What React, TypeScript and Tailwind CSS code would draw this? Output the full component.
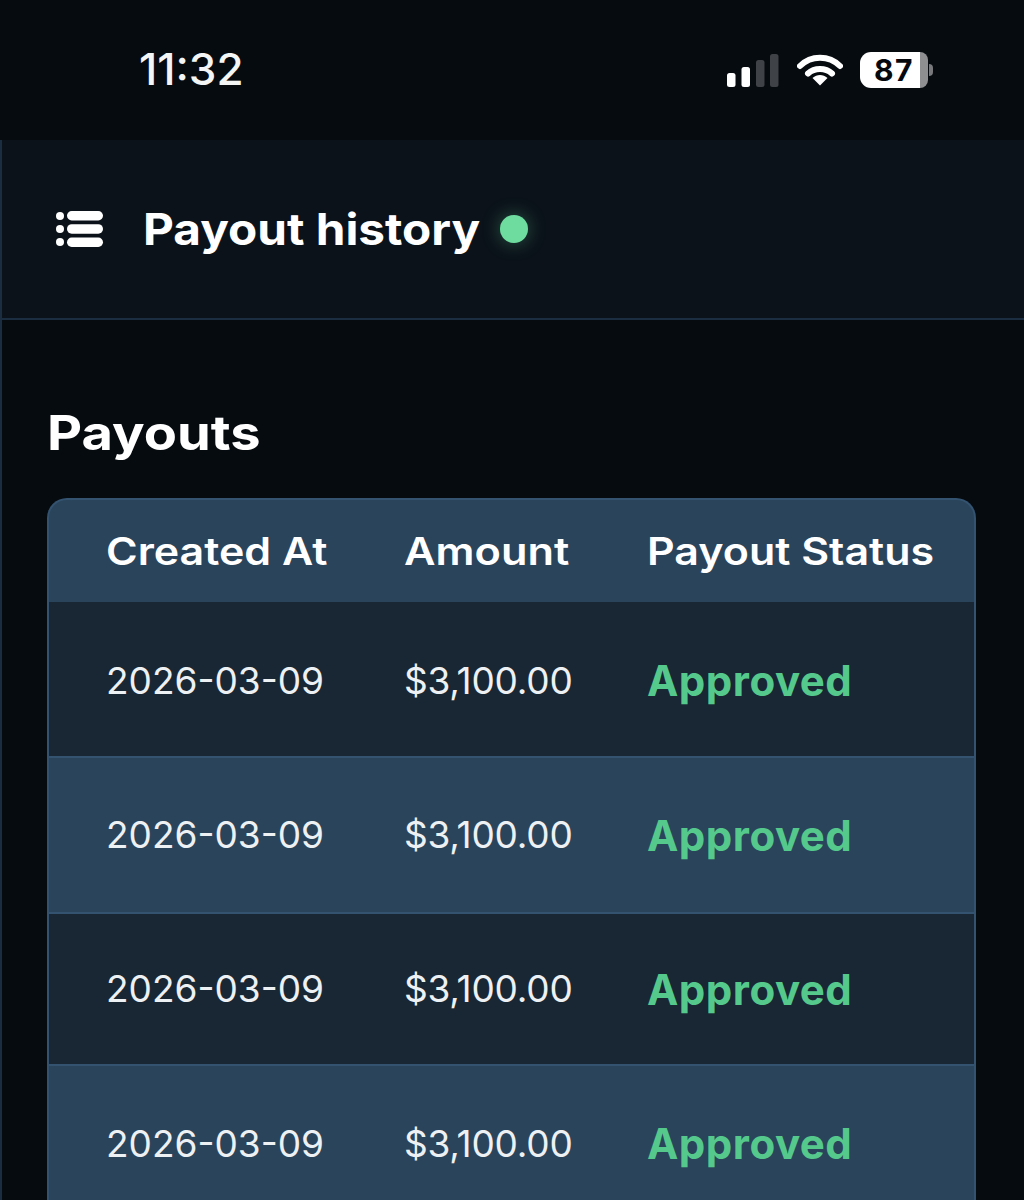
const rows = [
  { bg: "bg-[#192735]", height: "h-[156px]", pad: "pt-[3px]" },
  { bg: "bg-[#2a445b]", height: "h-[156px]", pad: "pt-0" },
  { bg: "bg-[#192735]", height: "h-[152px]", pad: "pt-0" },
  { bg: "bg-[#2a445b]", height: "h-[154px]", pad: "pt-[3px]" },
];

// the reference heading face is an extended grotesque, Inter stretched sideways is the nearest
const wide = "origin-left whitespace-nowrap font-['Inter',sans-serif]";

function SignalIcon() {
  return (
    <svg width="52" height="33" viewBox="0 0 52 33" className="block">
      <rect x="0" y="19" width="8.5" height="14" rx="2.5" fill="#fff" />
      <rect x="14.5" y="13" width="8.5" height="20" rx="2.5" fill="#fff" />
      <rect x="29" y="6" width="8.5" height="27" rx="2.5" fill="#3f4347" />
      <rect x="43" y="0" width="8.5" height="33" rx="2.5" fill="#3f4347" />
    </svg>
  );
}

function WifiIcon() {
  return (
    <svg width="46" height="34" viewBox="0 0 46 34" className="block">
      <path d="M3 13 C14 2 32 2 43 13" fill="none" stroke="#fff" strokeWidth="6" strokeLinecap="round" />
      <path d="M11 20.5 C17.5 14.5 28.5 14.5 35 20.5" fill="none" stroke="#fff" strokeWidth="6" strokeLinecap="round" />
      <path d="M15.5 25 C20 21 26 21 30.5 25 L23 32.5 Z" fill="#fff" />
    </svg>
  );
}

function BatteryIcon() {
  return (
    <div className="flex items-center">
      <div className="flex h-[36px] w-[60px] items-center rounded-l-[11px] bg-white pl-[14px]">
        <span className="text-[30px] leading-none font-bold tracking-[1.5px] text-[#05090e]">87</span>
      </div>
      <div className="h-[36px] w-[8px] rounded-r-[10px] bg-[#8d8f91]" />
      <div className="ml-[1px] h-[12px] w-[4px] rounded-r-full bg-[#77797b]" />
    </div>
  );
}

function ListIcon() {
  return (
    <svg width="49" height="38" viewBox="0 0 49 38" className="block">
      <circle cx="5" cy="6" r="4" fill="#fff" />
      <circle cx="5" cy="19" r="4" fill="#fff" />
      <circle cx="5" cy="32" r="4" fill="#fff" />
      <rect x="12" y="1" width="36" height="9.5" rx="4.7" fill="#fff" />
      <rect x="12" y="14.2" width="36" height="9.5" rx="4.7" fill="#fff" />
      <rect x="12" y="27.5" width="36" height="9.5" rx="4.7" fill="#fff" />
    </svg>
  );
}

export default function App() {
  return (
    <div className="h-[1200px] w-[1024px] overflow-hidden bg-[#060b10] font-['Inter',sans-serif] text-white">
      <div className="flex h-[140px] items-center justify-between pr-[91px] pl-[139px]">
        <span className="-mt-[2px] text-[44px] leading-none font-medium text-[#f4f5f5]">11:32</span>
        <div className="flex items-center">
          <SignalIcon />
          <div className="ml-[18px]">
            <WifiIcon />
          </div>
          <div className="ml-[17px]">
            <BatteryIcon />
          </div>
        </div>
      </div>

      <div className="h-[1060px] border-l-2 border-[#1b2e41]">
        <div className="flex h-[180px] items-center border-b-2 border-[#1b2e41] bg-[#0b121a] pl-[53px]">
          <ListIcon />
          <h1 className={`ml-[39px] ${wide} scale-x-[1.084] text-[44px] leading-none font-bold text-white`}>
            Payout history
          </h1>
          <span className="ml-[46px] size-[28px] rounded-full bg-[#6fdc9f] shadow-[0_0_18px_rgba(111,220,159,0.35)]" />
        </div>

        <div className="pt-[86px] pr-[48px] pl-[45px]">
          <h2 className={`${wide} scale-x-[1.13] text-[48px] leading-[54px] font-bold text-white`}>Payouts</h2>

          <div className="mt-[38px] overflow-hidden rounded-t-[20px] border-x-2 border-t-2 border-[#335370] bg-[#2a445b]">
            <div className="flex h-[102px] items-center text-[38px] font-semibold text-white">
              <div className={`w-[355px] pl-[57px] ${wide}`}>
                <span className={`inline-block ${wide} scale-x-[1.13]`}>Created At</span>
              </div>
              <div className={`w-[243px] ${wide}`}>
                <span className={`inline-block ${wide} scale-x-[1.14]`}>Amount</span>
              </div>
              <div className={wide}>
                <span className={`inline-block ${wide} scale-x-[1.13]`}>Payout Status</span>
              </div>
            </div>
            {rows.map((row, i) => (
              <div
                key={i}
                className={`flex ${row.height} items-center border-b-2 border-[#335370] ${row.bg} ${row.pad} text-[37px] text-[#eef1f3]`}
              >
                <div className="w-[355px] pl-[57px]">2026-03-09</div>
                <div className="w-[243px] tracking-[-0.2px]">$3,100.00</div>
                <div className="text-[42px] font-bold tracking-[0.5px] text-[#55c98c]">Approved</div>
              </div>
            ))}
          </div>
        </div>
      </div>
    </div>
  );
}
